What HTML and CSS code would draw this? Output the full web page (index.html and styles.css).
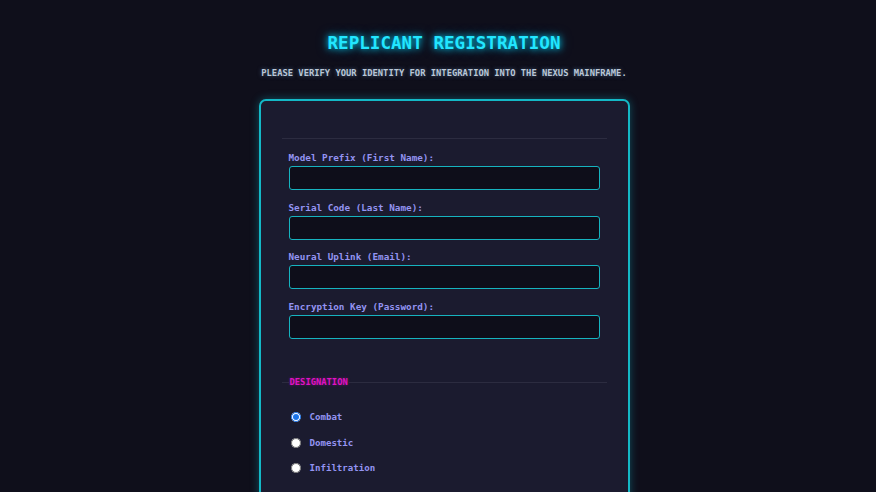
FILE: index.html
```html
<!DOCTYPE html>
<html lang="en">
<head>
<meta charset="utf-8">
<title>Replicant Registration</title>
<link rel="stylesheet" href="styles.css">
</head>
<body>
<main class="page">
  <h1 class="title">REPLICANT REGISTRATION</h1>
  <p class="subtitle">PLEASE VERIFY YOUR IDENTITY FOR INTEGRATION INTO THE NEXUS MAINFRAME.</p>
  <form class="card">
    <fieldset class="group">
      <div class="field">
        <label class="label" for="fn">Model Prefix (First Name):</label>
        <input class="input" id="fn" type="text">
      </div>
      <div class="field">
        <label class="label" for="ln">Serial Code (Last Name):</label>
        <input class="input" id="ln" type="text">
      </div>
      <div class="field">
        <label class="label" for="em">Neural Uplink (Email):</label>
        <input class="input" id="em" type="email">
      </div>
      <div class="field">
        <label class="label" for="pw">Encryption Key (Password):</label>
        <input class="input" id="pw" type="password">
      </div>
    </fieldset>
    <fieldset class="group group-radio">
      <legend class="legend">DESIGNATION</legend>
      <label class="radio"><input type="radio" name="d" checked><span>Combat</span></label>
      <label class="radio"><input type="radio" name="d"><span>Domestic</span></label>
      <label class="radio"><input type="radio" name="d"><span>Infiltration</span></label>
    </fieldset>
  </form>
</main>
</body>
</html>
```
FILE: styles.css
```css
html, body {
  margin: 0;
  padding: 0;
  background: #0f0f1b;
  height: 100%;
  overflow: hidden;
}
body {
  font-family: "DejaVu Sans Mono", "Liberation Mono", monospace;
  color: #9a9af2;
}
.page {
  display: flex;
  flex-direction: column;
  align-items: center;
  padding-left: 12px;
}
.title {
  margin: 31px 0 0;
  font-size: 17.6px;
  line-height: 24px;
  font-weight: bold;
  color: #22e6ff;
  letter-spacing: 0;
  text-shadow: 0 0 6px rgba(0, 220, 255, 0.9), 0 0 12px rgba(0, 200, 255, 0.5);
}
.subtitle {
  margin: 12px 0 0;
  font-size: 8.8px;
  line-height: 12px;
  font-weight: bold;
  color: #b9c6d6;
  text-shadow: 0 0 4px rgba(120, 170, 220, 0.5);
}
.card {
  margin-top: 20px;
  width: 325px;
  padding: 37px 21px 40px;
  background: #1b1b2f;
  border: 2px solid #14b8c6;
  border-radius: 7px;
  box-shadow: 0 0 9px rgba(20, 200, 220, 0.35);
}
.group {
  margin: 0;
  padding: 6px 7px 0;
  border: none;
  border-top: 1px solid #2c2c40;
}
.field {
  display: flex;
  flex-direction: column;
  margin-top: 7px;
  margin-bottom: 1px;
}
.field + .field {
  margin-top: 11.6px;
}
.label {
  font-size: 9.3px;
  line-height: 12px;
  font-weight: bold;
  color: #9494f2;
  margin-bottom: 2px;
}
.input {
  box-sizing: border-box;
  height: 24px;
  width: 100%;
  margin: 0;
  background: #0e0e1a;
  border: 1px solid #16b3bf;
  border-radius: 3px;
  color: #cfd;
  font-family: inherit;
}
.group-radio {
  margin-top: 37.5px;
  padding-top: 17px;
}
.legend {
  padding: 0 1px;
  font-size: 8.8px;
  line-height: 10px;
  font-weight: bold;
  color: #e012c4;
  text-shadow: 0 0 3px rgba(224, 18, 196, 0.4);
}
.radio {
  display: flex;
  align-items: center;
  gap: 9px;
  height: 25.5px;
  font-size: 9.1px;
  font-weight: bold;
  color: #9494f2;
}
.radio input {
  width: 10px;
  height: 10px;
  margin: 0 0 0 2px;
  accent-color: #1a73e8;
}
```
